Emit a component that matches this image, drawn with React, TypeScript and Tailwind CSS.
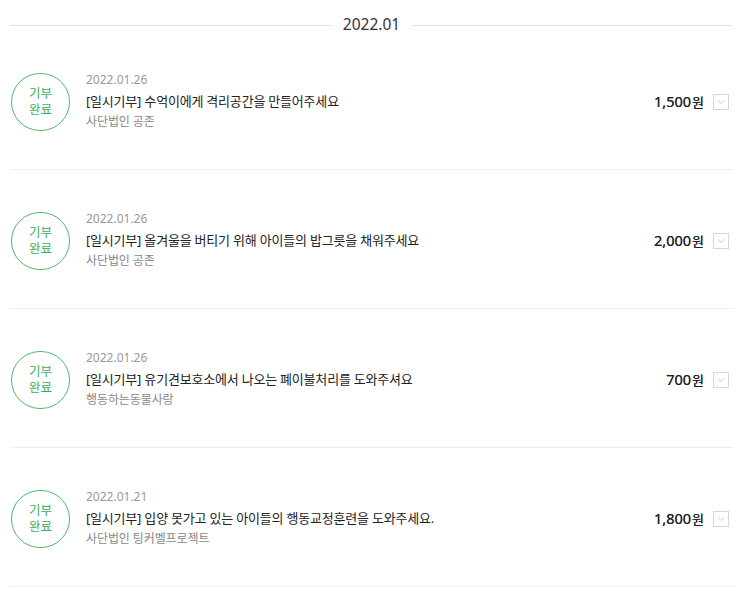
import { ChevronDown } from 'lucide-react'

const donations = [
  { date: '2022.01.26', title: '[일시기부] 수억이에게 격리공간을 만들어주세요', org: '사단법인 공존', amount: '1,500' },
  { date: '2022.01.26', title: '[일시기부] 올겨울을 버티기 위해 아이들의 밥그릇을 채워주세요', org: '사단법인 공존', amount: '2,000' },
  { date: '2022.01.26', title: '[일시기부] 유기견보호소에서 나오는 폐이불처리를 도와주셔요', org: '행동하는동물사랑', amount: '700' },
  { date: '2022.01.21', title: '[일시기부] 입양 못가고 있는 아이들의 행동교정훈련을 도와주세요.', org: '사단법인 팅커벨프로젝트', amount: '1,800' },
]

const font = { fontFamily: '"Noto Sans", "Noto Sans CJK KR", sans-serif' }

export default function App() {
  return (
    <div className="w-[743px] bg-white px-[10px]" style={font}>
      <div className="flex h-[50px] items-center">
        <div className="h-px flex-1 bg-[#e2e2e2]" />
        <span className="px-[11px] text-[15.5px] text-[#333]">2022.01</span>
        <div className="h-px flex-1 bg-[#e2e2e2]" />
      </div>

      <ul>
        {donations.map((d, i) => (
          <li
            key={i}
            className={`flex items-center border-b border-[#eeeeee] pl-[1px] pr-[4px] ${i === 0 ? 'pt-[21px] pb-[37px]' : 'pt-[40px] pb-[37px]'}`}
          >
            <div className="flex h-[58px] w-[59px] shrink-0 flex-col items-center justify-center rounded-full border-[1.5px] border-[#4dbb69] text-[12.5px] leading-[16px] text-[#3aad57]">
              <span>기부</span>
              <span>완료</span>
            </div>
            <div className="ml-[16px] flex-1">
              <p className="text-[12px] leading-[18px] text-[#999]">{d.date}</p>
              <p className="mt-[1px] text-[13px] leading-[22px] tracking-[-0.2px] text-[#222]">{d.title}</p>
              <p className="text-[12px] leading-[20px] tracking-[-0.1px] text-[#888]">{d.org}</p>
            </div>
            <span className="text-[14.5px] text-[#222] [text-shadow:0_0_0.15px_#333]">
              {d.amount}
              <span className="ml-[1px] text-[13px]">원</span>
            </span>
            <button className="ml-[9px] flex h-[16px] w-[16px] items-center justify-center border border-[#d6d6d6] bg-white">
              <ChevronDown size={12} strokeWidth={1.5} className="text-[#bbb]" />
            </button>
          </li>
        ))}
      </ul>
    </div>
  )
}
